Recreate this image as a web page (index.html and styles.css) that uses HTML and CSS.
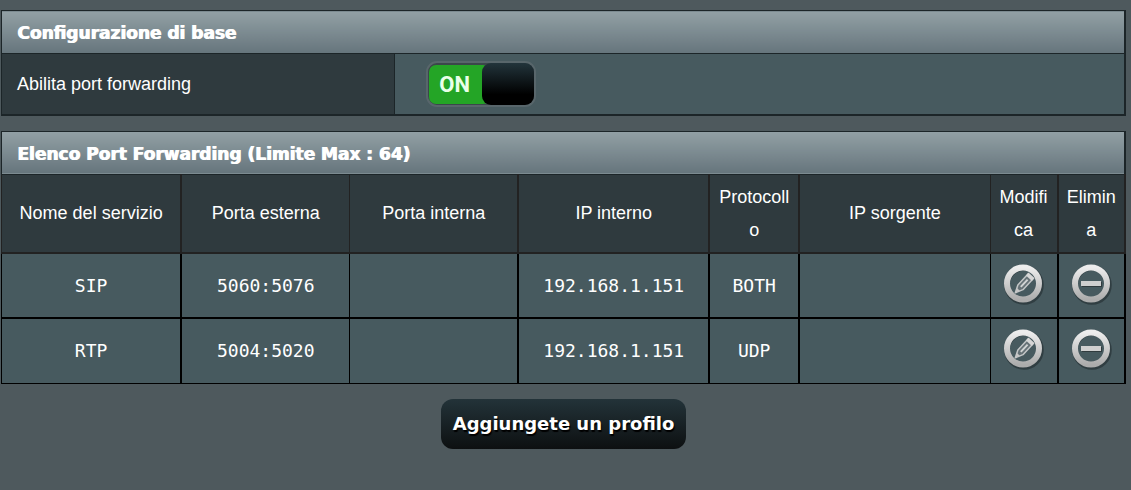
FILE: index.html
```
<!DOCTYPE html>
<html lang="it">
<head>
<meta charset="utf-8">
<title>Port Forwarding</title>
<meta name="viewport" content="width=device-width, initial-scale=1">
<link rel="stylesheet" href="styles.css">
</head>
<body>

<!-- icon shapes shared by the rows -->
<svg class="defs" width="0" height="0">
  <defs>
    <linearGradient id="ring" x1="0" y1="0" x2="0" y2="1">
      <stop offset="0" stop-color="#ededed"/>
      <stop offset="1" stop-color="#acacac"/>
    </linearGradient>
    <symbol id="edit" viewBox="0 0 42 42">
      <circle cx="21" cy="21" r="17" fill="none" stroke="#222b2e" stroke-opacity=".6" stroke-width="5.5"/>
      <circle cx="20" cy="19.5" r="16" fill="none" stroke="url(#ring)" stroke-width="6"/>
      <g transform="translate(20.5 20) rotate(43)">
        <path d="M-3.5 -11h7v15.500l-3.500 7.500l-3.500 -7.500z" fill="#667277" stroke="#c3c6c7" stroke-width="1.500" stroke-linejoin="round"/>
        <path d="M-4 -11.500h8v3.500h-8z" fill="#d6d6d6"/>
        <path d="M0 -6v10" fill="none" stroke="#d0d3d3" stroke-width="2"/>
        <path d="M-2 7.500h4l-2 4z" fill="#c6c6c6"/>
      </g>
    </symbol>
    <symbol id="remove" viewBox="0 0 42 42">
      <circle cx="22" cy="21" r="17" fill="none" stroke="#222b2e" stroke-opacity=".6" stroke-width="5.5"/>
      <circle cx="21" cy="19.5" r="16" fill="none" stroke="url(#ring)" stroke-width="6"/>
      <path d="M12 18h20v5h-20z" fill="#303b3e"/>
      <path d="M11 17h20v5h-20z" fill="#cfcfcf"/>
    </symbol>
  </defs>
</svg>

<table class="form-table basic">
  <colgroup>
    <col class="w35"><col>
  </colgroup>
  <thead>
    <tr><td colspan="2">Configurazione di base</td></tr>
  </thead>
  <tbody>
    <tr>
      <th><label for="pf_enable">Abilita port forwarding</label></th>
      <td>
        <label class="switch">
          <input type="checkbox" id="pf_enable" checked>
          <span class="switch-on">ON</span>
          <span class="switch-knob"></span>
        </label>
      </td>
    </tr>
  </tbody>
</table>

<table class="form-table list">
  <colgroup>
    <col class="w16"><col class="w15"><col class="w15"><col class="w17">
    <col class="w8"><col class="w17"><col class="w6"><col class="w6">
  </colgroup>
  <thead>
    <tr><td colspan="8">Elenco Port Forwarding (Limite Max : 64)</td></tr>
  </thead>
  <tbody>
    <tr>
      <th>Nome del servizio</th>
      <th>Porta esterna</th>
      <th>Porta interna</th>
      <th>IP interno</th>
      <th>Protocollo</th>
      <th>IP sorgente</th>
      <th>Modifica</th>
      <th>Elimina</th>
    </tr>
    <tr>
      <td>SIP</td>
      <td>5060:5076</td>
      <td></td>
      <td>192.168.1.151</td>
      <td>BOTH</td>
      <td></td>
      <td><button class="icon-btn" type="button" aria-label="Modifica"><svg><use href="#edit"/></svg></button></td>
      <td><button class="icon-btn" type="button" aria-label="Elimina"><svg><use href="#remove"/></svg></button></td>
    </tr>
    <tr>
      <td>RTP</td>
      <td>5004:5020</td>
      <td></td>
      <td>192.168.1.151</td>
      <td>UDP</td>
      <td></td>
      <td><button class="icon-btn" type="button" aria-label="Modifica"><svg><use href="#edit"/></svg></button></td>
      <td><button class="icon-btn" type="button" aria-label="Elimina"><svg><use href="#remove"/></svg></button></td>
    </tr>
  </tbody>
</table>

<div class="actions">
  <button class="button_gen" type="button">Aggiungete un profilo</button>
</div>

</body>
</html>
```
FILE: styles.css
```
body {
  margin: 10px 5px 0 1px;
  background: #4e595d;
  color: #ffffff;
  font-family: Arial, "Liberation Sans", sans-serif;
  font-size: 18px;
}
.defs {
  position: absolute;
}

/* tables */
.form-table {
  width: 100%;
  margin-bottom: 15px;
  table-layout: fixed;
  border-collapse: collapse;
  border: 1px solid #1c2528;
  border-right-width: 2px;
  border-bottom-width: 2px;
}
.form-table td,
.form-table th {
  box-sizing: border-box;
  font-weight: normal;
}
.form-table thead td {
  height: 43px;
  padding: 2px 15px 0;
  background: linear-gradient(to bottom, #92a0a5, #66757c);
  border-bottom: 1px solid #1c2528;
  font-family: "DejaVu Sans", Verdana, sans-serif;
  font-size: 17px;
  font-weight: bold;
  text-align: left;
  text-shadow: 1px 0 0 #ffffff;
}
.form-table tbody th {
  background: #2f3a3e;
}
.form-table tbody td {
  background: #475a5f;
}

.basic tbody th {
  height: 61px;
  padding: 2px 15px 0;
  border-right: 1px solid #1c2528;
  text-align: left;
}
.basic tbody td {
  padding: 0 31px;
}

.list {
  border-bottom-width: 1px;
}
.list tbody th {
  height: 79px;
  padding: 6px 5px 5px;
  border: 2px solid #222222;
  border-top: 1px solid #1c2528;
  line-height: 33px;
  word-break: break-all;
}
.list tbody td {
  height: 65px;
  padding: 0 5px 1px;
  border: 2px solid #000000;
  font-family: "Lucida Console", "DejaVu Sans Mono", monospace;
  text-align: center;
}
.list tbody th:first-child,
.list tbody td:first-child {
  border-left-width: 1px;
}
.list tbody th:nth-child(2),
.list tbody td:nth-child(2),
.list tbody th:nth-child(6),
.list tbody td:nth-child(6) {
  border-right-width: 1px;
}
.list tbody th:nth-child(3),
.list tbody td:nth-child(3),
.list tbody th:nth-child(7),
.list tbody td:nth-child(7) {
  border-left-width: 1px;
}
.list tbody tr:last-child td {
  border-bottom-width: 1px;
}
.w6 { width: 6%; }
.w8 { width: 8%; }
.w15 { width: 15%; }
.w16 { width: 16%; }
.w17 { width: 17%; }
.w35 { width: 35%; }

/* on / off switch */
.switch {
  position: relative;
  display: flex;
  box-sizing: border-box;
  width: 110px;
  height: 46px;
  border: 2px solid #58666b;
  border-radius: 11px;
  background: #3b474b;
  cursor: pointer;
}
.switch input {
  position: absolute;
  width: 100%;
  height: 100%;
  margin: 0;
  opacity: 0;
}
.switch-on {
  flex: 1;
  margin: 2px -8px 1px 1px;
  padding-left: 10px;
  border-radius: 7px;
  background: #24a526;
  color: #e9ffe9;
  font-family: Roboto, sans-serif;
  font-size: 22px;
  font-weight: bold;
  line-height: 40px;
}
.switch-knob {
  width: 52px;
  height: 42px;
  border-radius: 9px;
  background: linear-gradient(to bottom, #22343b, #000000 75%);
  z-index: 1;
}

/* buttons */
.icon-btn {
  display: block;
  width: 42px;
  height: 42px;
  margin: 0 auto;
  padding: 0;
  border: 0;
  background: none;
  cursor: pointer;
}
.icon-btn svg {
  display: block;
  width: 42px;
  height: 42px;
}
.actions {
  text-align: center;
}
.button_gen {
  height: 50px;
  padding: 0 12px;
  border: 0;
  border-radius: 12px;
  background: linear-gradient(to bottom, #233339, #0d1011);
  color: #ffffff;
  font-family: Verdana, "DejaVu Sans", sans-serif;
  font-size: 18px;
  font-weight: bold;
  text-shadow: 1px 2px 1px #000000;
  cursor: pointer;
}
```
